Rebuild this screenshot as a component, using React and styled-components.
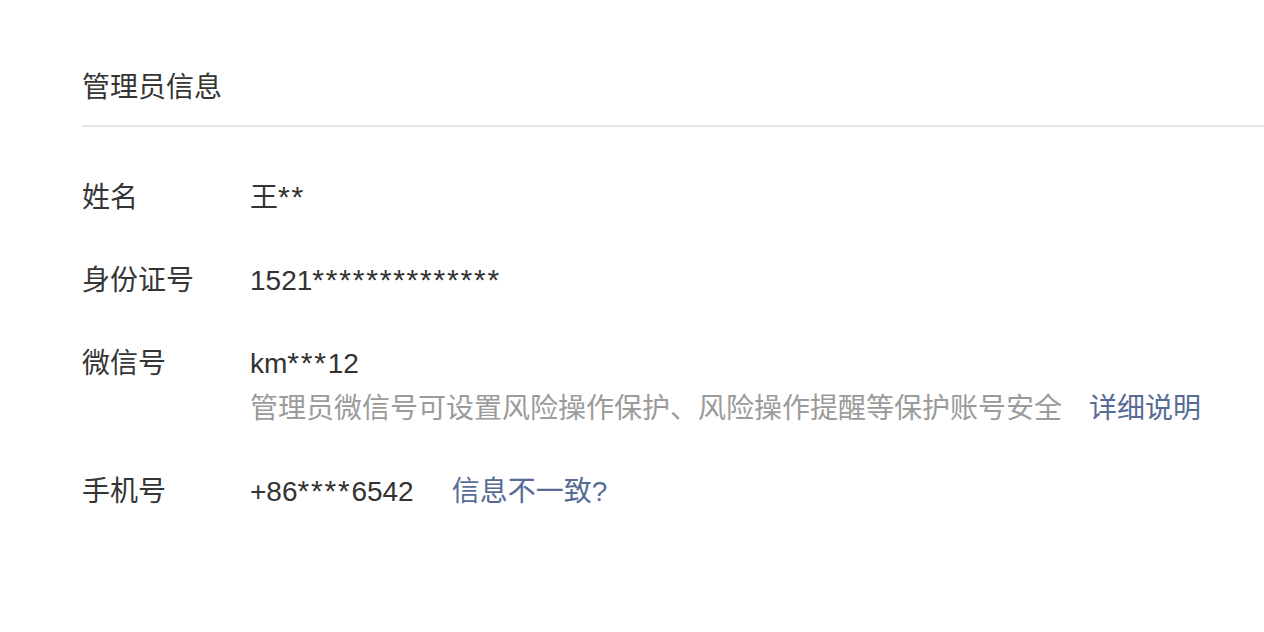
import React from 'react';
import styled, { createGlobalStyle } from 'styled-components';

const GlobalStyle = createGlobalStyle`
    body {
        margin: 0;
        background: #fff;
        font-family: "Liberation Sans", "Noto Sans CJK SC", sans-serif;
        color: #353535;
    }
`;

const Page = styled.div`
    padding: 68px 0 0 82px;
`;

const Header = styled.div`
    font-size: 28px;
    line-height: 40px;
    padding-bottom: 17px;
    border-bottom: 2px solid #e6e6ea;
`;

const List = styled.div`
    display: flex;
    flex-direction: column;
    gap: 38px;
    padding-top: 48px;
`;

const Row = styled.div`
    display: grid;
    grid-template-columns: 168px 1fr;
    font-size: 28px;
    line-height: 45px;
`;

const Label = styled.div`
    color: #353535;
`;

const Value = styled.div`
    color: #333;
`;

// masked characters are drawn wider in the original font
const Mask = styled.span`
    font-size: 30px;
    line-height: 0;
    letter-spacing: 1.8px;
`;

const Hint = styled.div`
    color: #9b9b9b;
`;

const Link = styled.a`
    color: #576b95;
    margin-left: ${p => p.gap || 30}px;
    text-decoration: none;
    cursor: pointer;
`;

const rows = [
    { label: '姓名', value: '王**' },
    { label: '身份证号', value: '1521**************' },
    {
        label: '微信号',
        value: 'km***12',
        hint: '管理员微信号可设置风险操作保护、风险操作提醒等保护账号安全',
        hintLink: '详细说明'
    },
    { label: '手机号', value: '+86****6542', link: '信息不一致?' }
];

const renderValue = (text) =>
    text.split(/(\*+)/).filter(Boolean).map((part, i) =>
        part[0] === '*' ? <Mask key={i}>{part}</Mask> : part
    );

const App = () => (
    <Page>
        <GlobalStyle />
        <Header>管理员信息</Header>
        <List>
            {rows.map(row => (
                <Row key={row.label}>
                    <Label>{row.label}</Label>
                    <div>
                        <Value>
                            {renderValue(row.value)}
                            {row.link && <Link gap={38}>{row.link}</Link>}
                        </Value>
                        {row.hint && (
                            <Hint>
                                {row.hint}
                                <Link gap={27}>{row.hintLink}</Link>
                            </Hint>
                        )}
                    </div>
                </Row>
            ))}
        </List>
    </Page>
);

export default App;
